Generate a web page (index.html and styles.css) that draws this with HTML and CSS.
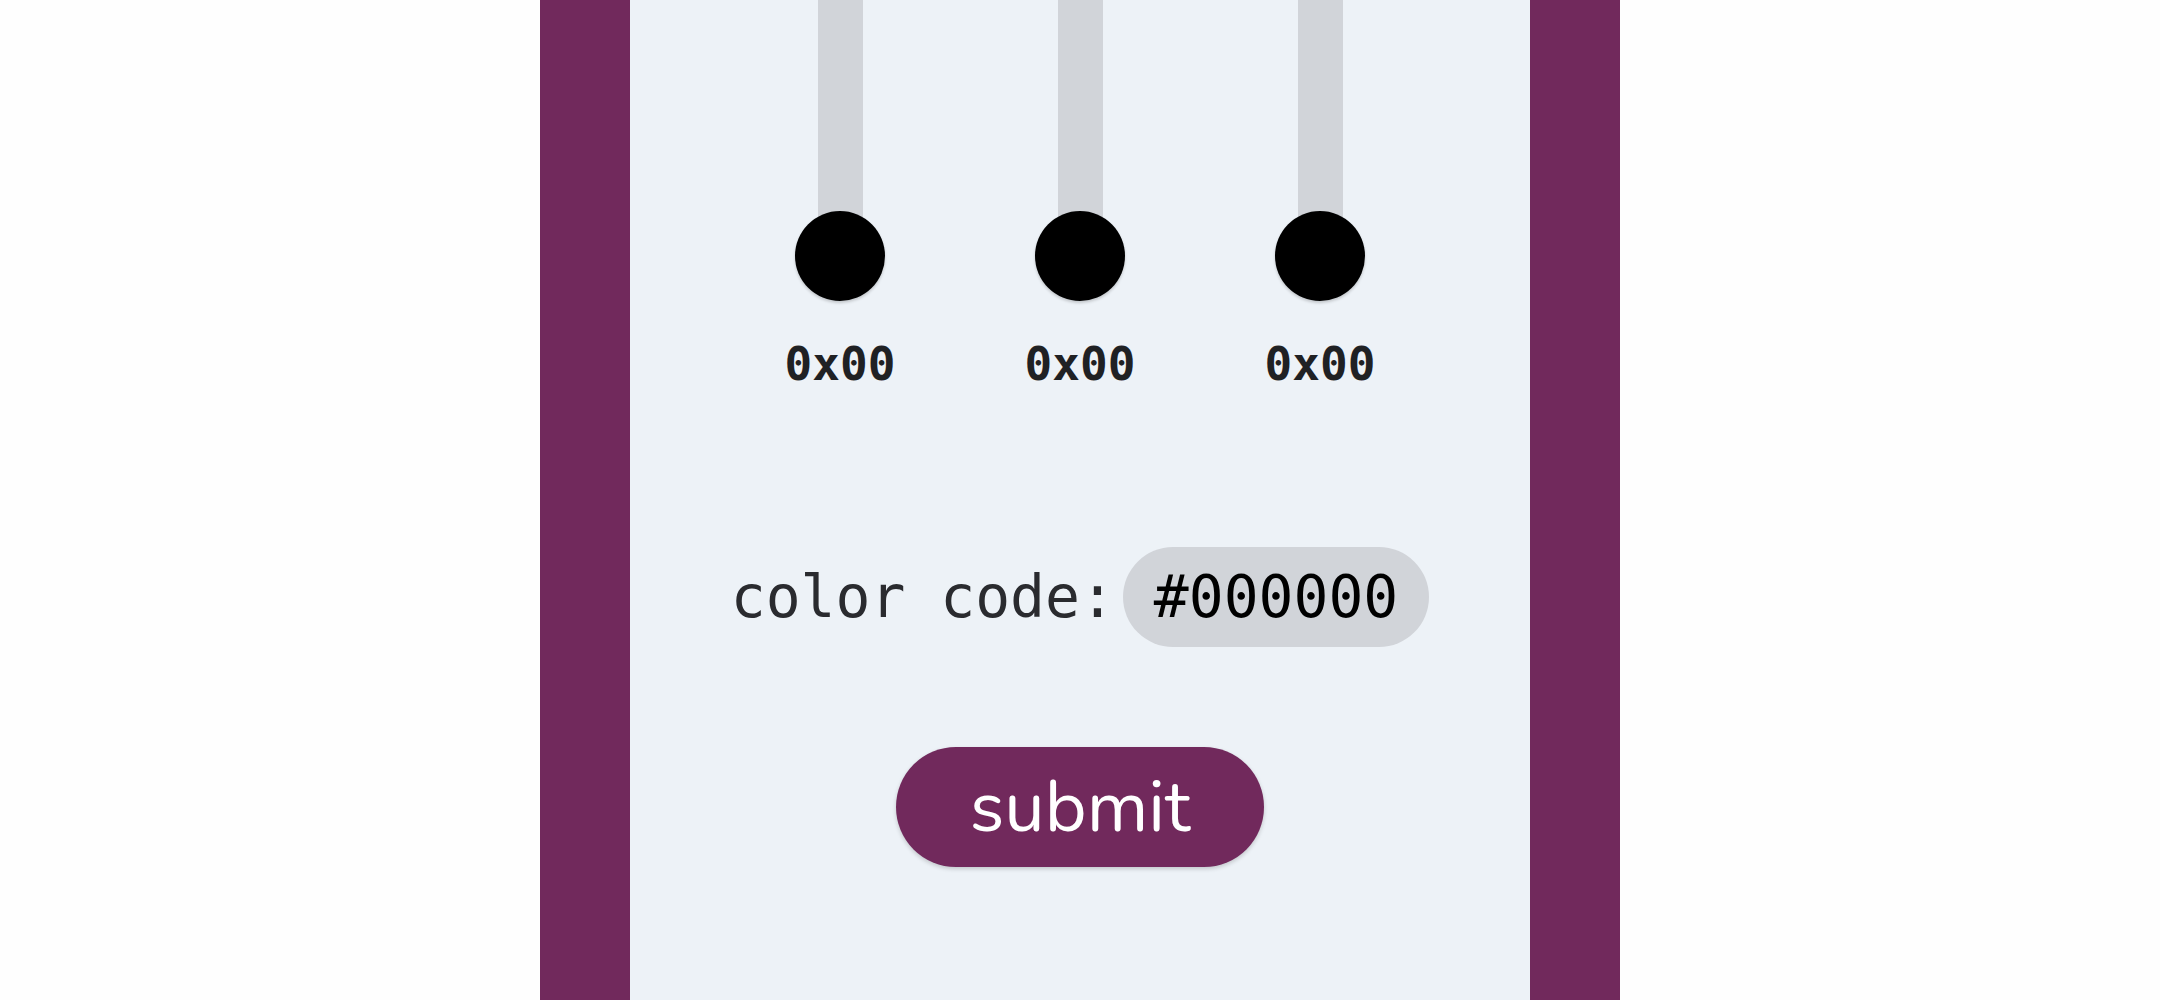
FILE: index.html
```html
<!DOCTYPE html>
<html lang="en">
<head>
<meta charset="utf-8">
<title>color picker</title>
<link rel="stylesheet" href="styles.css">
</head>
<body>
<main class="frame">
  <section class="sliders">
    <div class="slider">
      <div class="track"><span class="knob"></span></div>
      <div class="value">0x00</div>
    </div>
    <div class="slider">
      <div class="track"><span class="knob"></span></div>
      <div class="value">0x00</div>
    </div>
    <div class="slider">
      <div class="track"><span class="knob"></span></div>
      <div class="value">0x00</div>
    </div>
  </section>
  <section class="code-row">
    <span class="code-label">color code:</span>
    <span class="code-pill">#000000</span>
  </section>
  <section class="actions">
    <button class="submit" type="button">submit</button>
  </section>
</main>
</body>
</html>
```
FILE: styles.css
```css
html, body {
  margin: 0;
  padding: 0;
  background: #fefefe;
}

.frame {
  box-sizing: content-box;
  width: 900px;
  min-height: 1000px;
  margin: 0 auto;
  border-left: 90px solid #71295c;
  border-right: 90px solid #71295c;
  background: #edf2f7;
  display: flex;
  flex-direction: column;
  align-items: center;
}

.sliders {
  display: flex;
  justify-content: center;
}

.slider {
  width: 240px;
  display: flex;
  flex-direction: column;
  align-items: center;
}

.track {
  position: relative;
  width: 45px;
  height: 256px;
  background: #d1d4d9;
}

.knob {
  position: absolute;
  left: 50%;
  bottom: -45px;
  width: 90px;
  height: 90px;
  margin-left: -45px;
  border-radius: 50%;
  background: #000;
  box-shadow: 0 2px 3px rgba(0, 0, 0, 0.18);
}

.value {
  margin-top: 85px;
  font-family: "DejaVu Sans Mono", "Liberation Mono", monospace;
  font-weight: bold;
  font-size: 46px;
  line-height: 1;
  color: #1f2124;
}

.code-row {
  margin-top: 160px;
  display: flex;
  align-items: center;
  gap: 8px;
  font-family: "DejaVu Sans Mono", "Liberation Mono", monospace;
  font-size: 58px;
  line-height: 1;
}

.code-label {
  color: #2a2b2f;
}

.code-pill {
  padding: 21px 31px;
  border-radius: 50px;
  background: #d1d4d9;
  color: #000;
}

.actions {
  margin-top: 100px;
}

.submit {
  height: 120px;
  padding: 0 74px;
  border: none;
  border-radius: 60px;
  background: #71295c;
  color: #fff;
  font-family: "Nunito", "Inter", "Lato", sans-serif;
  font-size: 72px;
  font-weight: 400;
  line-height: 1;
  box-shadow: 0 2px 4px rgba(0, 0, 0, 0.18);
  cursor: pointer;
}
```
